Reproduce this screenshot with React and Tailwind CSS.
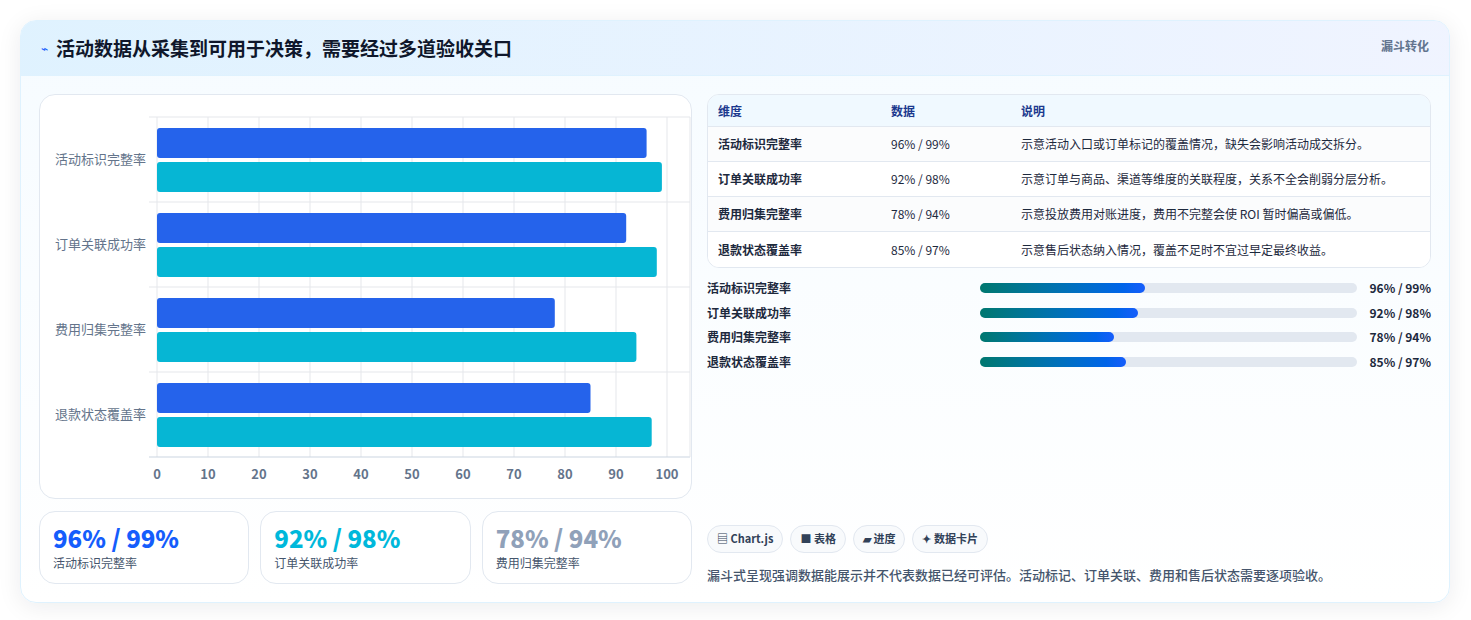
const font = { fontFamily: '"Noto Sans CJK SC", "Noto Sans", sans-serif' };

const rows = [
  { name: '活动标识完整率', a: 96, b: 99, val: '96% / 99%', note: '示意活动入口或订单标记的覆盖情况，缺失会影响活动成交拆分。', fill: '43.8%' },
  { name: '订单关联成功率', a: 92, b: 98, val: '92% / 98%', note: '示意订单与商品、渠道等维度的关联程度，关系不全会削弱分层分析。', fill: '41.9%' },
  { name: '费用归集完整率', a: 78, b: 94, val: '78% / 94%', note: '示意投放费用对账进度，费用不完整会使 ROI 暂时偏高或偏低。', fill: '35.5%' },
  { name: '退款状态覆盖率', a: 85, b: 97, val: '85% / 97%', note: '示意售后状态纳入情况，覆盖不足时不宜过早定最终收益。', fill: '38.7%' },
];

function Chart() {
  const x0 = 117, w = 510, y0 = 22, rh = 85;
  return (
    <svg width="653" height="403" className="block">
      {Array.from({ length: 11 }).map((_, i) => (
        <g key={i}>
          <line x1={x0 + i * 51} x2={x0 + i * 51} y1={y0} y2={y0 + 340} stroke="#e5e7eb" />
          <text x={x0 + i * 51} y={384} textAnchor="middle" fontSize="13" fontWeight="600" fill="#64748b">{i * 10}</text>
        </g>
      ))}
      <line x1={x0 - 8} x2={x0 + w + 23} y1={y0} y2={y0} stroke="#e5e7eb" />
      {[1, 2, 3].map((i) => (
        <line key={i} x1={x0 - 8} x2={x0 + w + 23} y1={y0 + i * rh} y2={y0 + i * rh} stroke="#e5e7eb" />
      ))}
      <line x1={x0 - 8} x2={x0 + w + 23} y1={y0 + 340} y2={y0 + 340} stroke="#cbd5e1" />
      <line x1={x0 + w + 23} x2={x0 + w + 23} y1={y0} y2={y0 + 340} stroke="#e5e7eb" />
      {rows.map((r, i) => (
        <g key={r.name}>
          <text x={106} y={y0 + i * rh + 47} textAnchor="end" fontSize="13" fill="#64748b">{r.name}</text>
          <rect x={x0} y={y0 + i * rh + 11} width={r.a * 5.1} height={30} rx="3" fill="#2563eb" />
          <rect x={x0} y={y0 + i * rh + 45} width={r.b * 5.1} height={30} rx="3" fill="#06b6d4" />
        </g>
      ))}
    </svg>
  );
}

export default function App() {
  return (
    <div className="min-h-screen bg-white p-5" style={font}>
      <div className="w-[1430px] rounded-2xl border border-sky-100 bg-gradient-to-b from-sky-50/60 to-white shadow-[0_4px_24px_rgba(15,23,42,0.08)] overflow-hidden">
        <div className="h-[55px] flex items-center justify-between px-5 bg-gradient-to-r from-sky-100 to-indigo-50/80 border-b border-sky-100">
          <div className="flex items-center gap-2">
            <span className="text-blue-600 text-xs">⌁</span>
            <h1 className="text-[19px] font-bold text-slate-900">活动数据从采集到可用于决策，需要经过多道验收关口</h1>
          </div>
          <span className="self-start mt-4 text-[12px] font-semibold text-slate-500">漏斗转化</span>
        </div>
        <div className="flex gap-[15px] p-[18px]">
          <div className="w-[653px] flex flex-col gap-[12px]">
            <div className="rounded-2xl border border-slate-200 bg-white"><Chart /></div>
            <div className="flex gap-[11px]">
              {[
                ['96% / 99%', 'text-blue-600', '活动标识完整率'],
                ['92% / 98%', 'text-cyan-500', '订单关联成功率'],
                ['78% / 94%', 'text-slate-400', '费用归集完整率'],
              ].map(([v, c, l]) => (
                <div key={l} className="flex-1 h-[73px] rounded-2xl border border-slate-200 bg-white px-[13px] pt-[10px]">
                  <div className={`text-[24px] font-extrabold leading-8 ${c}`}>{v}</div>
                  <div className="text-[12px] text-slate-600">{l}</div>
                </div>
              ))}
            </div>
          </div>
          <div className="flex-1 flex flex-col">
            <div className="rounded-xl border border-slate-200 overflow-hidden bg-white">
              <div className="flex h-[32px] items-center bg-sky-50 text-[12px] font-bold text-blue-900 border-b border-slate-200">
                <div className="w-[183px] pl-[10px]">维度</div><div className="w-[130px]">数据</div><div>说明</div>
              </div>
              {rows.map((r, i) => (
                <div key={r.name} className={`flex h-[35px] items-center text-[12px] text-slate-800 ${i < 3 ? 'border-b border-slate-200' : ''} ${i % 2 ? 'bg-white' : 'bg-slate-50/60'}`}>
                  <div className="w-[183px] pl-[10px] font-semibold">{r.name}</div>
                  <div className="w-[130px]">{r.val}</div>
                  <div>{r.note}</div>
                </div>
              ))}
            </div>
            <div className="mt-[8px] flex flex-col">
              {rows.map((r) => (
                <div key={r.name} className="flex items-center h-[24.5px] text-[12px]">
                  <div className="w-[273px] font-semibold text-slate-800">{r.name}</div>
                  <div className="w-[377px] h-[10px] rounded-full bg-slate-200">
                    <div className="h-full rounded-full bg-gradient-to-r from-teal-700 to-blue-600" style={{ width: r.fill }} />
                  </div>
                  <div className="flex-1 text-right font-bold text-slate-800">{r.val}</div>
                </div>
              ))}
            </div>
            <div className="mt-auto flex gap-[7px]">
              {['▤ Chart.js', '■ 表格', '▰ 进度', '✦ 数据卡片'].map((t) => (
                <span key={t} className="h-[28px] px-[9px] flex items-center rounded-full border border-slate-200 bg-slate-50 text-[11px] font-semibold text-slate-700">{t}</span>
              ))}
            </div>
            <p className="mt-[12px] text-[13px] text-slate-600 font-medium">漏斗式呈现强调数据能展示并不代表数据已经可评估。活动标记、订单关联、费用和售后状态需要逐项验收。</p>
          </div>
        </div>
      </div>
    </div>
  );
}
